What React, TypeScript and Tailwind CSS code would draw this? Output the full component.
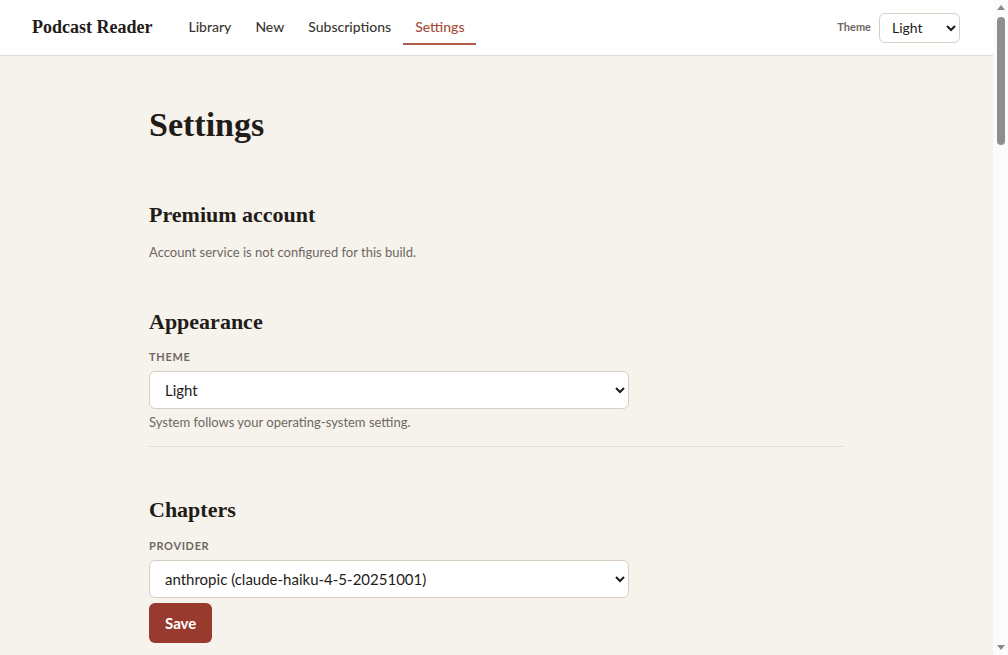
import React from "react";

const serif = { fontFamily: '"Liberation Serif", "DejaVu Serif", serif' };

function NavLink({ label, active }: { label: string; active?: boolean }) {
  return (
    <a
      href="#"
      className={
        active
          ? "px-3 py-[6px] leading-5 border-b-2 border-[#b05a48] text-[#a54c3c] font-medium"
          : "px-3 py-[6px] leading-5 border-b-2 border-transparent text-[#3b3733] font-medium"
      }
    >
      {label}
    </a>
  );
}

function Field({ label, value }: { label: string; value: string }) {
  return (
    <label className="flex flex-col">
      <span className="text-[11px] leading-4 font-bold tracking-[0.06em] uppercase text-[#6f6862]">
        {label}
      </span>
      <select
        defaultValue={value}
        className="mt-[6px] w-full max-w-[480px] h-[38px] pl-[11px] pr-2 bg-white border border-[#d8cec2] rounded-md text-[15px] text-[#1f1c19]"
      >
        <option>{value}</option>
      </select>
    </label>
  );
}

function Scrollbar() {
  return (
    <div className="w-[15px] shrink-0 h-full bg-[#fbfbfb] flex flex-col items-center">
      <div className="h-[15px] flex items-center justify-center">
        <div className="w-0 h-0 border-l-[4px] border-r-[4px] border-b-[5px] border-l-transparent border-r-transparent border-b-[#8a8a8a]" />
      </div>
      <div className="mt-[2px] w-[8px] h-[128px] rounded-full bg-[#8f8f8f]" />
      <div className="flex-1" />
      <div className="h-[15px] flex items-center justify-center">
        <div className="w-0 h-0 border-l-[4px] border-r-[4px] border-t-[5px] border-l-transparent border-r-transparent border-t-[#8a8a8a]" />
      </div>
    </div>
  );
}

export default function App() {
  return (
    <div
      className="h-screen flex bg-[#f6f2ec] text-[#1f1c19]"
      style={{ fontFamily: 'Lato, "Noto Sans", sans-serif' }}
    >
      <div className="flex-1 min-w-0 overflow-hidden">
        <header className="h-[56px] bg-white border-b border-[#e2dbd1] flex items-center pl-8 pr-[33px]">
          <div className="text-[18px] font-bold text-[#1f1c19] mr-6" style={serif}>
            Podcast Reader
          </div>
          <nav className="flex items-center text-[14px]">
            <NavLink label="Library" />
            <NavLink label="New" />
            <NavLink label="Subscriptions" />
            <NavLink label="Settings" active />
          </nav>
          <div className="ml-auto flex items-center gap-2">
            <span className="text-[11px] font-bold text-[#6f6862]">Theme</span>
            <select
              defaultValue="Light"
              className="w-[81px] h-[30px] pl-2 pr-1 bg-white border border-[#d8cec2] rounded-md text-[14px] text-[#1f1c19]"
            >
              <option>Light</option>
            </select>
          </div>
        </header>

        <main className="max-w-[695px] mx-auto pt-[48px] pb-24">
          <h1 className="text-[34px] leading-[41px] font-bold" style={serif}>
            Settings
          </h1>

          <section className="mt-[56px]">
            <h2 className="text-[22px] leading-[28px] font-bold" style={serif}>
              Premium account
            </h2>
            <p className="mt-[13px] text-[13px] leading-5 text-[#6f6862]">
              Account service is not configured for this build.
            </p>
          </section>

          <section className="mt-[46px]">
            <h2 className="text-[22px] leading-[28px] font-bold" style={serif}>
              Appearance
            </h2>
            <div className="mt-[13px]">
              <Field label="Theme" value="Light" />
            </div>
            <p className="mt-1 text-[13px] leading-[18px] text-[#6f6862]">
              System follows your operating-system setting.
            </p>
            <hr className="mt-[15px] border-0 border-t border-[#e2dbd1]" />
          </section>

          <section className="mt-[49px]">
            <h2 className="text-[22px] leading-[28px] font-bold" style={serif}>
              Chapters
            </h2>
            <div className="mt-[14px]">
              <Field label="Provider" value="anthropic (claude-haiku-4-5-20251001)" />
            </div>
            <button className="mt-[5px] h-[40px] px-4 rounded-md bg-[#983a2e] text-white text-[15px] font-bold">
              Save
            </button>
          </section>
        </main>
      </div>
      <Scrollbar />
    </div>
  );
}
